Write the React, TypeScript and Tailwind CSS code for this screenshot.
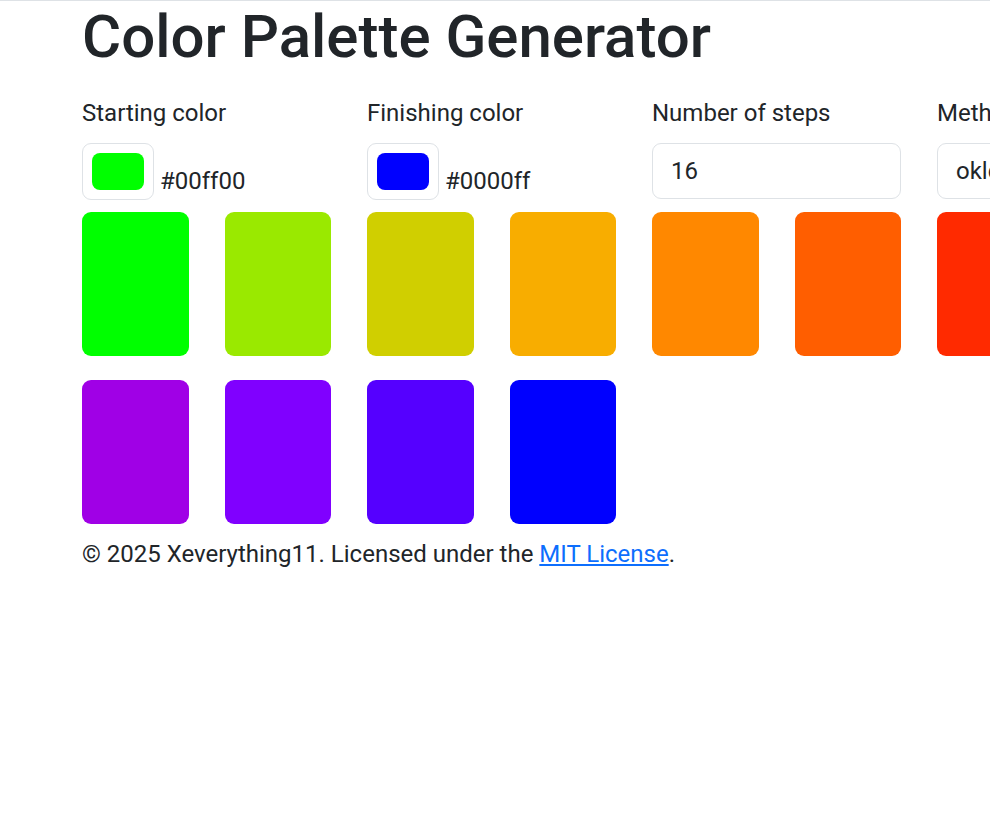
import React from "react";

const steps = [
    "#00ff00", "#9ae900", "#d0cf00", "#f8ad00", "#ff8800", "#ff5e00",
    "#ff2a00", "#ff0022", "#ff0055", "#f50088", "#dd00b3", "#c000d4",
    "#a000e6", "#8000ff", "#5500ff", "#0000ff",
];

const ColorField = ({ label, value }: { label: string; value: string }) => (
    <div>
        <label className="block text-[24px] leading-[36px] mb-[12px]">{label}</label>
        <div className="flex items-end gap-[6px]">
            <div className="h-[57px] w-[72px] rounded-[9px] border border-[#dee2e6] bg-white p-[9px]">
                <div className="h-full w-full rounded-[8px]" style={{ backgroundColor: value }} />
            </div>
            <span className="text-[24px] leading-[36px] pb-[1px]">{value}</span>
        </div>
    </div>
);

export default function App() {
    return (
        <div className="min-h-[826px] w-full overflow-hidden border-t border-[#dee2e6] bg-white font-['Roboto',sans-serif] text-[#212529]">
            <div className="w-[1674px] ml-[82px]">
                <h1 className="text-[60px] font-medium leading-[64px] mt-[4px] mb-[26px]">Color Palette Generator</h1>

                <div className="grid grid-cols-[repeat(4,249px)] gap-x-[36px]">
                    <ColorField label="Starting color" value="#00ff00" />
                    <ColorField label="Finishing color" value="#0000ff" />
                    <div>
                        <label className="block text-[24px] leading-[36px] mb-[12px]">Number of steps</label>
                        <div className="h-[56px] rounded-[9px] border border-[#dee2e6] px-[18px] text-[24px] leading-[54px]">16</div>
                    </div>
                    <div>
                        <label className="block text-[24px] leading-[36px] mb-[12px]">Method</label>
                        <div className="h-[56px] rounded-[9px] border border-[#dee2e6] px-[18px] text-[24px] leading-[54px] flex justify-between">
                            <span>oklch</span>
                            <span className="text-[16px]">▾</span>
                        </div>
                    </div>
                </div>

                <div className="mt-[12px] grid grid-cols-[repeat(12,106.5px)] gap-x-[36px] gap-y-[24px]">
                    {steps.map((c, i) => (
                        <div key={i} className="h-[144px] rounded-[9px]" style={{ backgroundColor: c }} />
                    ))}
                </div>

                <p className="mt-[12px] text-[24px] leading-[36px]">
                    © 2025 Xeverything11. Licensed under the{" "}
                    <a href="#" className="text-[#0d6efd] underline">MIT License</a>.
                </p>
            </div>
        </div>
    );
}
